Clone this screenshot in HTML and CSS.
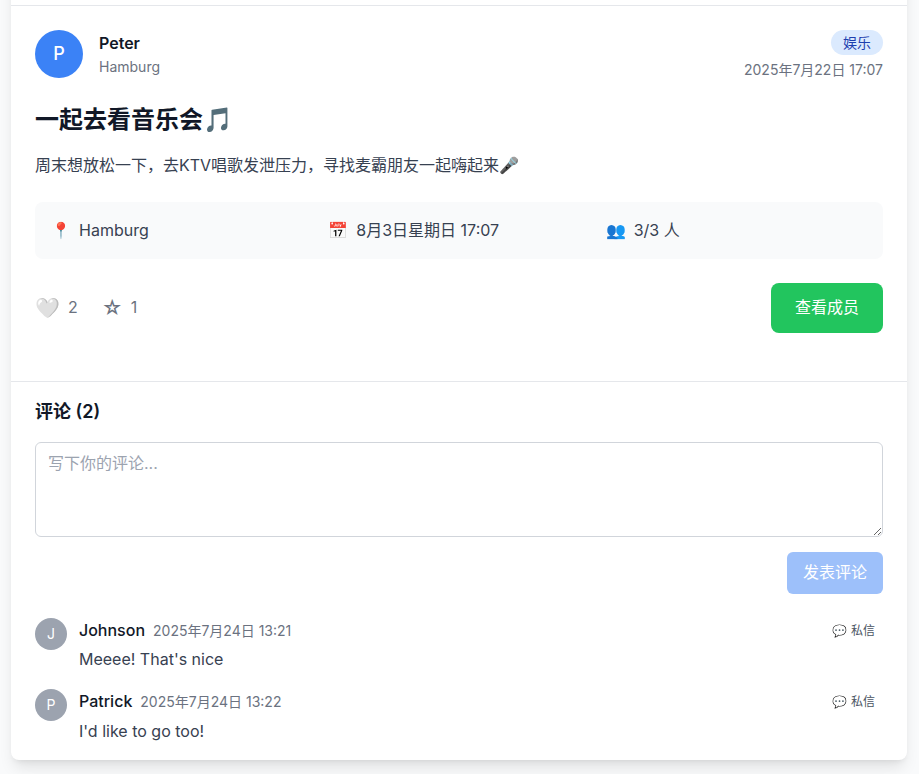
FILE: index.html
```html
<!DOCTYPE html>
<html lang="zh-CN">
<head>
<meta charset="utf-8">
<title>一起去看音乐会</title>
<link rel="stylesheet" href="styles.css">
</head>
<body>
<main class="card">
  <section class="post">
    <header class="post-head">
      <div class="avatar">P</div>
      <div class="author"><div class="name">Peter</div><div class="place">Hamburg</div></div>
      <div class="meta"><span class="tag">娱乐</span><time>2025年7月22日 17:07</time></div>
    </header>
    <h1>一起去看音乐会🎵</h1>
    <p class="text">周末想放松一下，去KTV唱歌发泄压力，寻找麦霸朋友一起嗨起来🎤</p>
    <div class="info">
      <div><span class="ic">📍</span><span>Hamburg</span></div>
      <div><span class="ic">📅</span><span>8月3日星期日 17:07</span></div>
      <div><span class="ic">👥</span><span>3/3 人</span></div>
    </div>
    <div class="actions">
      <span class="act like"><span class="big">🤍</span><span class="count">2</span></span>
      <span class="act"><span class="big">☆</span><span class="count">1</span></span>
      <button class="members">查看成员</button>
    </div>
  </section>
  <section class="comments">
    <h2>评论 (2)</h2>
    <textarea placeholder="写下你的评论..."></textarea>
    <div class="submit-row"><button class="submit">发表评论</button></div>
    <article class="comment">
      <div class="avatar small">J</div>
      <div class="body"><div class="line"><b>Johnson</b><time>2025年7月24日 13:21</time><a class="dm"><span class="bubble">💬</span> 私信</a></div><p>Meeee! That's nice</p></div>
    </article>
    <article class="comment">
      <div class="avatar small">P</div>
      <div class="body"><div class="line"><b>Patrick</b><time>2025年7月24日 13:22</time><a class="dm"><span class="bubble">💬</span> 私信</a></div><p>I'd like to go too!</p></div>
    </article>
  </section>
</main>
</body>
</html>
```
FILE: styles.css
```css
* { box-sizing: border-box; margin: 0; padding: 0; }
html { overflow: hidden; }
body {
  height: 774px;
  overflow: hidden;
  background: #f9fafb;
  color: #111827;
  font: 16px/24px Inter, "Noto Sans CJK SC", sans-serif;
}
.card {
  width: 896px;
  height: 800px;
  margin: -40px 0 0 11px;
  padding-top: 45px;
  background: #fff;
  border-radius: 8px;
  box-shadow: 0 10px 15px -3px rgba(0,0,0,.1), 0 4px 6px -4px rgba(0,0,0,.1);
}
.post { height: 376px; padding: 24px; border-top: 1px solid #e5e7eb; }
.post-head { display: flex; align-items: flex-start; height: 48px; }
.avatar {
  display: flex; align-items: center; justify-content: center; flex: none;
  width: 48px; height: 48px; border-radius: 50%;
  background: #3b82f6; color: #fff; font-size: 18px; font-weight: 500;
}
.author { margin-left: 16px; padding-top: 1px; }
.name { font-weight: 600; }
.place, .meta time { color: #6b7280; font-size: 14px; }
.meta { margin-left: auto; display: flex; flex-direction: column; align-items: flex-end; }
.tag {
  height: 25px; padding: 0 12px; border-radius: 13px;
  background: #dbeafe; color: #1e40af; font-size: 14px; line-height: 26px;
}
.meta time { margin-top: 3px; }
h1 { margin-top: 26px; font-size: 24px; line-height: 32px; font-weight: 700; }
.text { margin-top: 16px; color: #374151; line-height: 26px; }
.info {
  display: grid; grid-template-columns: repeat(3, 1fr); gap: 16px;
  margin-top: 24px; padding: 16px; height: 57px;
  border-radius: 8px; background: #f9fafb; color: #374151;
}
.info > div { display: flex; gap: 8px; }
.ic { width: 20px; }
.actions { display: flex; align-items: center; margin-top: 24px; height: 50px; color: #6b7280; }
.act { display: flex; align-items: center; gap: 8px; margin-right: 24px; }
.big { font-size: 20px; }
.count { padding-bottom: 2px; }
button { border: 0; font: inherit; color: #fff; }
.members { margin-left: auto; height: 50px; padding: 0 24px 2px; border-radius: 8px; background: #22c55e; }
.comments { padding: 16px 24px; border-top: 1px solid #e5e7eb; }
h2 { font-size: 18px; line-height: 28px; font-weight: 600; }
textarea {
  display: block; width: 100%; height: 95px; margin-top: 16px; padding: 8px 12px;
  border: 1px solid #d1d5db; border-radius: 6px; font: inherit; resize: vertical;
}
textarea::placeholder { color: #9ca3af; }
.submit-row { display: flex; justify-content: flex-end; margin: 15px 0 24px; }
.submit { height: 42px; padding: 0 16px 2px; border-radius: 6px; background: #9dc0fa; }
.comment { display: flex; gap: 12px; height: 71px; }
.small { width: 32px; height: 32px; background: #9ca3af; font-size: 14px; font-weight: 400; }
.body { flex: 1; }
.line { display: flex; align-items: center; gap: 8px; height: 25px; }
.line b { font-weight: 500; padding-bottom: 1px; }
.line time { font-size: 14px; color: #6b7280; }
.dm { margin-left: auto; padding-right: 8px; font-size: 12px; color: #4b5563; }
.bubble { margin-right: 1px; }
.body p { margin-top: 4px; color: #374151; }
.comment:last-child p { margin-top: 5px; }
```
